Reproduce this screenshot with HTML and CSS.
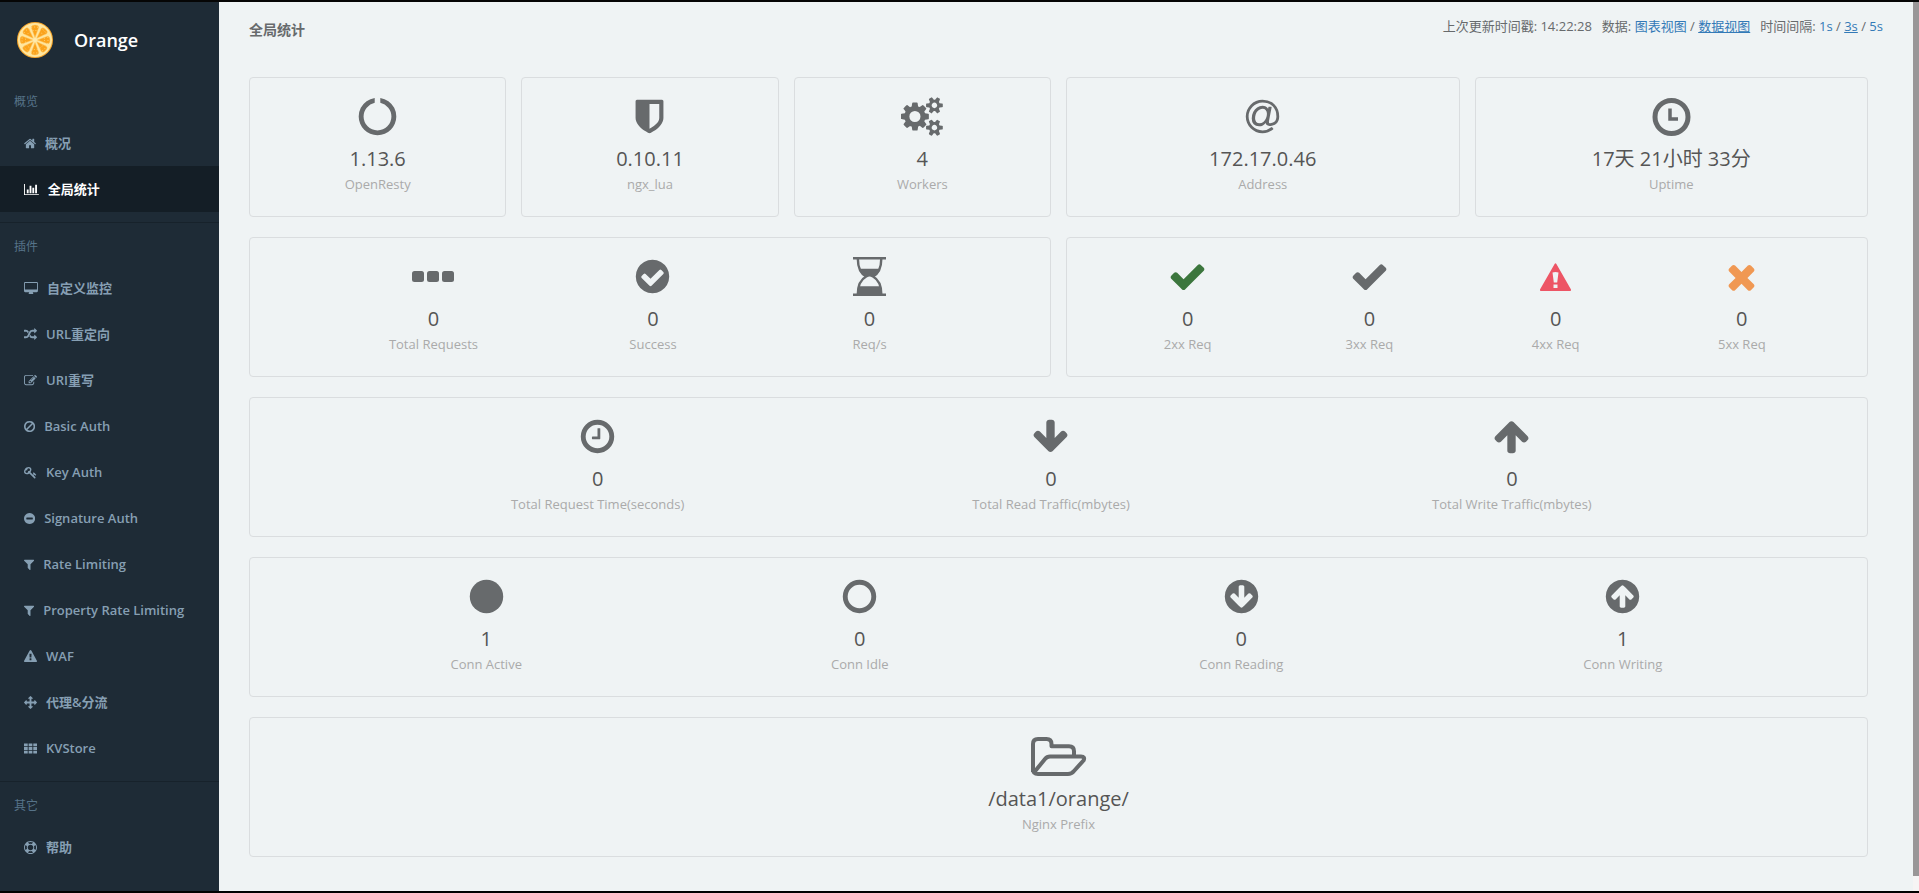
FILE: index.html
```html
<!DOCTYPE html>
<html lang="zh-CN">
<head>
<meta charset="utf-8">
<title>Orange - 全局统计</title>
<link rel="stylesheet" href="styles.css">
</head>
<body>
<svg class="sprite" aria-hidden="true">
  <symbol id="filter" viewBox="192 0 1408 1792"><path d="M1595 295q17 41-14 70l-493 493v742q0 42-39 59-13 5-25 5-27 0-45-19l-256-256q-19-19-19-45v-486l-493-493q-31-29-14-70 17-39 59-39h1280q42 0 59 39z"/></symbol>
  <symbol id="check" viewBox="0 0 1792 1792"><path d="M1671 566q0 40-28 68l-724 724-136 136q-28 28-68 28t-68-28l-136-136-362-362q-28-28-28-68t28-68l136-136q28-28 68-28t68 28l294 295 656-657q28-28 68-28t68 28l136 136q28 28 28 68z"/></symbol>
  <symbol id="circle-down" viewBox="0 0 1792 1792"><path d="M1412 897q0-27-18-45l-91-91q-18-18-45-18t-45 18l-189 189v-502q0-26-19-45t-45-19h-128q-26 0-45 19t-19 45v502l-189-189q-19-19-45-19t-45 19l-91 91q-18 18-18 45t18 45l362 362 91 91q18 18 45 18t45-18l91-91 362-362q18-18 18-45zm252-1q0 209-103 385.500t-279.500 279.500-385.500 103-385.500-103-279.500-279.500-103-385.500 103-385.500 279.500-279.500 385.500-103 385.500 103 279.500 279.500 103 385.500z" fill-rule="evenodd"/></symbol>
</svg>
<div class="app">
  <nav class="sidebar">
    <div class="brand">
      <svg class="brand-logo" viewBox="0 0 36 36" aria-hidden="true">
        <circle cx="18" cy="18" r="18" fill="#f6a62c"/>
        <circle cx="18" cy="18" r="17" fill="#ffe6a0"/>
        <g fill="#fba31c" stroke="#ffc45c" stroke-width=".5">
          <path id="seg" d="M18 15.500L14.300 5.500Q14.200 3.200 18 3T21.700 5.500z"/>
          <use href="#seg" transform="rotate(45 18 18)"/>
          <use href="#seg" transform="rotate(90 18 18)"/>
          <use href="#seg" transform="rotate(135 18 18)"/>
          <use href="#seg" transform="rotate(180 18 18)"/>
          <use href="#seg" transform="rotate(225 18 18)"/>
          <use href="#seg" transform="rotate(270 18 18)"/>
          <use href="#seg" transform="rotate(315 18 18)"/>
        </g>
        <circle cx="18" cy="18" r="13" fill="none" stroke="#ffdf94" stroke-width=".8" stroke-dasharray="1 2"/>
        <circle cx="18" cy="18" r="9.500" fill="none" stroke="#ffdf94" stroke-width=".8" stroke-dasharray="1 2"/>
        <circle cx="18" cy="18" r="2" fill="#ffe9ad"/>
      </svg>
      <span class="brand-name">Orange</span>
    </div>
    <section class="nav-group">
      <h2 class="nav-heading">概览</h2>
      <a class="nav-link" href="#"><svg viewBox="64 0 1664 1792"><path d="M1472 992v480q0 26-19 45t-45 19h-384v-384h-256v384h-384q-26 0-45-19t-19-45v-480q0-1 .5-3t.5-3l575-474 575 474q1 2 1 6zm223-69l-62 74q-8 9-21 11h-3q-13 0-21-7l-692-577-692 577q-12 8-24 7-13-2-21-11l-62-74q-8-10-7-23.500t11-21.500l719-599q32-26 76-26t76 26l244 204v-195q0-14 9-23t23-9h192q14 0 23 9t9 23v408l219 182q10 8 11 21.500t-7 23.500z"/></svg>概况</a>
      <a class="nav-link nav-link-active" href="#"><svg viewBox="0 0 2048 1792"><path d="M640 896v512h-256v-512h256zm384-512v1024h-256v-1024h256zm1024 1152v128h-2048v-1536h128v1408h1920zm-640-896v768h-256v-768h256zm384-384v1152h-256v-1152h256z"/></svg>全局统计</a>
    </section>
    <section class="nav-group nav-group-ruled">
      <h2 class="nav-heading">插件</h2>
      <a class="nav-link" href="#"><svg viewBox="-64 0 1920 1792"><path d="M1728 992v-832q0-13-9.500-22.500t-22.500-9.500h-1600q-13 0-22.500 9.500t-9.500 22.500v832q0 13 9.500 22.500t22.500 9.500h1600q13 0 22.500-9.500t9.500-22.500zm128-832v1088q0 66-47 113t-113 47h-544q0 37 16 77.500t32 71 16 43.500q0 26-19 45t-45 19h-512q-26 0-45-19t-19-45q0-14 16-44t32-70 16-78h-544q-66 0-113-47t-47-113v-1088q0-66 47-113t113-47h1600q66 0 113 47t47 113z"/></svg>自定义监控</a>
      <a class="nav-link" href="#"><svg viewBox="0 0 1792 1792"><path d="M666 481q-60 92-137 273-22-45-37-72.500t-40.500-63.500-51-56.500-63-35-81.500-14.500h-224q-14 0-23-9t-9-23v-192q0-14 9-23t23-9h224q250 0 410 225zm1126 799q0 14-9 23l-320 320q-9 9-23 9-13 0-22.500-9.500t-9.500-22.500v-192q-32 0-85 .5t-81 1-73-1-71-5-64-10.500-63-18.500-58-28.500-59-40-55-53.500-56-69.500q59-93 136-273 22 45 37 72.500t40.500 63.500 51 56.500 63 35 81.500 14.500h256v-192q0-14 9-23t23-9q12 0 24 10l319 319q9 9 9 23zm0-896q0 14-9 23l-320 320q-9 9-23 9-13 0-22.500-9.500t-9.500-22.500v-192h-256q-48 0-87 15t-69 45-51 61.500-45 77.500q-32 62-78 171-29 66-49.500 111t-54 105-64 100-74 83-90 68.500-106.500 42-128 16.500h-224q-14 0-23-9t-9-23v-192q0-14 9-23t23-9h224q48 0 87-15t69-45 51-61.500 45-77.500q32-62 78-171 29-66 49.500-111t54-105 64-100 74-83 90-68.500 106.500-42 128-16.500h256v-192q0-14 9-23t23-9q12 0 24 10l319 319q9 9 9 23z"/></svg>URL重定向</a>
      <a class="nav-link" href="#"><svg viewBox="0 0 1792 1792"><path d="M888 1184l116-116-152-152-116 116v56h96v96h56zm440-720q-16-16-33 1l-350 350q-17 17-1 33t33-1l350-350q17-17 1-33zm80 594v190q0 119-84.500 203.500t-203.500 84.500h-832q-119 0-203.500-84.500t-84.500-203.500v-832q0-119 84.500-203.500t203.500-84.500h832q63 0 117 25 15 7 18 23 3 17-9 29l-49 49q-14 14-32 8-23-6-45-6h-832q-66 0-113 47t-47 113v832q0 66 47 113t113 47h832q66 0 113-47t47-113v-126q0-13 9-22l64-64q15-15 35-7t20 29zm-96-738l288 288-672 672h-288v-288zm444 132l-92 92-288-288 92-92q28-28 68-28t68 28l152 152q28 28 28 68t-28 68z"/></svg>URI重写</a>
      <a class="nav-link" href="#"><svg viewBox="128 0 1536 1792"><path d="M1440 893q0-161-87-295l-754 753q137 89 297 89 111 0 211.500-43.500t173.500-116.500 116-174.500 43-212.500zm-999 299l755-754q-135-91-300-91-148 0-273 73t-198 199-73 274q0 162 89 299zm1223-299q0 157-61 300t-163.500 246-245 164-298.500 61-298.500-61-245-164-163.500-246-61-300 61-299.500 163.500-245.500 245-164 298.500-61 298.500 61 245 164 163.500 245.500 61 299.500z"/></svg>Basic Auth</a>
      <a class="nav-link" href="#"><svg viewBox="0 0 1792 1792"><path d="M832 512q0-80-56-136t-136-56-136 56-56 136q0 42 19 83-41-19-83-19-80 0-136 56t-56 136 56 136 136 56 136-56 56-136q0-42-19-83 41 19 83 19 80 0 136-56t56-136zm851 704q0 17-49 66t-66 49q-9 0-28.500-16t-36.500-33-38.500-40-24.500-26l-96 96 220 220q28 28 28 68 0 42-39 81t-81 39q-40 0-68-28l-671-671q-176 131-365 131-163 0-265.500-102.500t-102.500-265.500q0-160 95-313t248-248 313-95q163 0 265.500 102.500t102.500 265.500q0 189-131 365l355 355 96-96q-3-3-26-24.500t-40-38.500-33-36.500-16-28.500q0-17 49-66t66-49q13 0 23 10 6 6 46 44.500t82 79.500 86.500 86 73 78 28.500 41z"/></svg>Key Auth</a>
      <a class="nav-link" href="#"><svg viewBox="128 0 1536 1792"><path d="M1344 960v-128q0-26-19-45t-45-19h-768q-26 0-45 19t-19 45v128q0 26 19 45t45 19h768q26 0 45-19t19-45zm320-64q0 209-103 385.500t-279.500 279.500-385.500 103-385.500-103-279.500-279.500-103-385.500 103-385.500 279.500-279.500 385.500-103 385.500 103 279.500 279.500 103 385.500z" fill-rule="evenodd"/></svg>Signature Auth</a>
      <a class="nav-link" href="#"><svg viewBox="0 0 1408 1792"><use href="#filter" width="1408" height="1792"/></svg>Rate Limiting</a>
      <a class="nav-link" href="#"><svg viewBox="0 0 1408 1792"><use href="#filter" width="1408" height="1792"/></svg>Property Rate Limiting</a>
      <a class="nav-link" href="#"><svg viewBox="0 0 1792 1792"><path fill-rule="evenodd" d="M1024 1375v-190q0-14-9.500-23.500t-22.500-9.500h-192q-13 0-22.500 9.500t-9.500 23.500v190q0 14 9.500 23.500t22.500 9.500h192q13 0 22.500-9.500t9.500-23.500zm-2-374l18-459q0-12-10-19-13-11-24-11h-220q-11 0-24 11-10 7-10 21l17 457q0 10 10 16.500t24 6.500h185q14 0 23.500-6.500t10.500-16.500zm-14-934l768 1408q35 63-2 126-17 29-46.500 46t-63.500 17h-1536q-34 0-63.500-17t-46.500-46q-37-63-2-126l768-1408q17-31 47-49t65-18 65 18 47 49z"/></svg>WAF</a>
      <a class="nav-link" href="#"><svg viewBox="0 0 1792 1792"><path d="M1792 896q0 26-19 45l-256 256q-19 19-45 19t-45-19-19-45v-128h-384v384h128q26 0 45 19t19 45-19 45l-256 256q-19 19-45 19t-45-19l-256-256q-19-19-19-45t19-45 45-19h128v-384h-384v128q0 26-19 45t-45 19-45-19l-256-256q-19-19-19-45t19-45l256-256q19-19 45-19t45 19 19 45v128h384v-384h-128q-26 0-45-19t-19-45 19-45l256-256q19-19 45-19t45 19l256 256q19 19 19 45t-19 45-45 19h-128v384h384v-128q0-26 19-45t45-19 45 19l256 256q19 19 19 45z"/></svg>代理&amp;分流</a>
      <a class="nav-link" href="#"><svg viewBox="0 0 1792 1792"><path d="M0 192h512v384H0zM640 192h512v384H640zM1280 192h512v384h-512zM0 704h512v384H0zM640 704h512v384H640zM1280 704h512v384h-512zM0 1216h512v384H0zM640 1216h512v384H640zM1280 1216h512v384h-512z"/></svg>KVStore</a>
    </section>
    <section class="nav-group nav-group-ruled">
      <h2 class="nav-heading">其它</h2>
      <a class="nav-link" href="#"><svg viewBox="0 0 1792 1792"><path fill-rule="evenodd" d="M896 0q182 0 348 71t286 191 191 286 71 348-71 348-191 286-286 191-348 71-348-71-286-191-191-286-71-348 71-348 191-286 286-191 348-71zm0 128q-190 0-361 90l194 194q82-28 167-28t167 28l194-194q-171-90-361-90zm-678 1129l194-194q-28-82-28-167t28-167l-194-194q-90 171-90 361t90 361zm678 407q190 0 361-90l-194-194q-82 28-167 28t-167-28l-194 194q171 90 361 90zm0-384q159 0 271.500-112.500t112.500-271.500-112.500-271.500-271.500-112.500-271.500 112.500-112.500 271.500 112.500 271.500 271.500 112.500zm484-217l194 194q90-171 90-361t-90-361l-194 194q28 82 28 167t-28 167z"/></svg>帮助</a>
    </section>
  </nav>

  <main class="content">
    <header class="page-head">
      <h1 class="page-title">全局统计</h1>
      <div class="page-tools">
        <span>上次更新时间戳: 14:22:28</span>
        <span>数据: <a href="#">图表视图</a> / <a class="current" href="#">数据视图</a></span>
        <span>时间间隔: <a href="#">1s</a> / <a class="current" href="#">3s</a> / <a href="#">5s</a></span>
      </div>
    </header>

    <div class="cards">
      <section class="card span-2">
        <div class="stat"><svg class="icon" viewBox="0 0 1792 1792"><path d="M1760 896q0 176-68.500 336t-184 275.500-275.500 184-336 68.500-336-68.500-275.500-184-184-275.500-68.500-336q0-213 97-398.500t265-305.500 374-151v228q-221 45-366.500 221t-145.500 406q0 130 51 248.500t136.500 204 204 136.500 248.500 51 248.500-51 204-136.500 136.500-204 51-248.500q0-230-145.500-406t-366.500-221v-228q206 31 374 151t265 305.500 97 398.500z"/></svg><p class="value">1.13.6</p><p class="label">OpenResty</p></div>
      </section>
      <section class="card span-2">
        <div class="stat"><svg class="icon" viewBox="0 0 1792 1792"><path d="M1344 960v-640h-448v1137q119-63 213-137 235-184 235-360zm192-768v768q0 86-33.500 170.500t-83 150-118 127.500-126.500 103-121 77.500-89.500 49.500-42.500 20q-12 6-26 6t-26-6q-16-7-42.500-20t-89.500-49.500-121-77.500-126.500-103-118-127.500-83-150-33.500-170.500v-768q0-26 19-45t45-19h1152q26 0 45 19t19 45z" fill-rule="evenodd"/></svg><p class="value">0.10.11</p><p class="label">ngx_lua</p></div>
      </section>
      <section class="card span-2">
        <div class="stat"><svg class="icon" viewBox="-64 0 1920 1792"><path d="M832 896q0-106-75-181t-181-75-181 75-75 181 75 181 181 75 181-75 75-181zm768 512q0-52-38-90t-90-38-90 38-38 90q0 53 37.500 90.500t90.500 37.500 90.500-37.500 37.500-90.500zm0-1024q0-52-38-90t-90-38-90 38-38 90q0 53 37.500 90.500t90.500 37.500 90.500-37.500 37.500-90.500zm-384 421v185q0 10-7 19.500t-16 10.500l-155 24q-11 35-32 76 34 48 90 115 7 11 7 20 0 12-7 19-23 30-82.500 89.500t-78.500 59.500q-11 0-21-7l-115-90q-37 19-77 31-11 108-23 155-7 24-30 24h-186q-11 0-20-7.500t-10-17.500l-23-153q-34-10-75-31l-118 89q-7 7-20 7-11 0-21-8-144-133-144-160 0-9 7-19 10-14 41-53t47-61q-23-44-35-82l-152-24q-10-1-17-9.500t-7-19.500v-185q0-10 7-19.500t16-10.500l155-24q11-35 32-76-34-48-90-115-7-11-7-20 0-12 7-20 22-30 82-89t79-59q11 0 21 7l115 90q34-18 77-32 11-108 23-154 7-24 30-24h186q11 0 20 7.500t10 17.500l23 153q34 10 75 31l118-89q8-7 20-7 11 0 21 8 144 133 144 160 0 8-7 19-12 16-42 54t-45 60q23 48 34 82l152 23q10 2 17 10.500t7 19.500zm640 533v140q0 16-149 31-12 27-30 52 51 113 51 138 0 4-4 7-122 71-124 71-8 0-46-47t-52-68q-20 2-30 2t-30-2q-14 21-52 68t-46 47q-2 0-124-71-4-3-4-7 0-25 51-138-18-25-30-52-149-15-149-31v-140q0-16 149-31 13-29 30-52-51-113-51-138 0-4 4-7 4-2 35-20t59-34 30-16q8 0 46 46.500t52 67.500q20-2 30-2t30 2q51-71 92-112l6-2q4 0 124 70 4 3 4 7 0 25-51 138 17 23 30 52 149 15 149 31zm0-1024v140q0 16-149 31-12 27-30 52 51 113 51 138 0 4-4 7-122 71-124 71-8 0-46-47t-52-68q-20 2-30 2t-30-2q-14 21-52 68t-46 47q-2 0-124-71-4-3-4-7 0-25 51-138-18-25-30-52-149-15-149-31v-140q0-16 149-31 13-29 30-52-51-113-51-138 0-4 4-7 4-2 35-20t59-34 30-16q8 0 46 46.500t52 67.500q20-2 30-2t30 2q51-71 92-112l6-2q4 0 124 70 4 3 4 7 0 25-51 138 17 23 30 52 149 15 149 31z" fill-rule="evenodd"/></svg><p class="value">4</p><p class="label">Workers</p></div>
      </section>
      <section class="card span-3">
        <div class="stat"><svg class="icon" viewBox="0 0 1792 1792"><path d="M1100 775q0-108-53.500-169t-147.500-61q-63 0-124 30.500t-110 84.500-79.500 137-30.500 180q0 112 53.500 173t150.500 61q96 0 176-66.500t122.500-166 42.500-203.500zm564 121q0 111-37 197t-98.500 135-131.500 74.500-145 27.500q-6 0-15.500.5t-16.500.5q-95 0-142-53-28-33-33-83-52 66-131.500 110t-173.500 44q-161 0-249.500-95.500t-88.500-269.500q0-157 66-290t179-210.500 246-77.500q87 0 155 35.500t106 99.500l2-19 11-56q1-6 5.500-12t9.500-6h118q5 0 13 11 5 5 3 16l-120 614q-5 24-5 48 0 39 12.500 52t44.500 13q28-1 57-5.500t73-24 77-50 57-89.500 24-137q0-292-174-466t-466-174q-130 0-248.500 51t-204 136.500-136.500 204-51 248.500 51 248.500 136.500 204 204 136.500 248.500 51q228 0 405-144 11-9 24-8t21 12l41 49q8 12 7 24-2 13-12 22-102 83-227.500 128t-258.500 45q-156 0-298-61t-245-164-164-245-61-298 61-298 164-245 245-164 298-61q344 0 556 212t212 556z"/></svg><p class="value">172.17.0.46</p><p class="label">Address</p></div>
      </section>
      <section class="card span-3">
        <div class="stat"><svg class="icon" viewBox="0 0 39 39"><circle cx="19.500" cy="20" r="16.500" fill="none" stroke="currentColor" stroke-width="5"/><path d="M18 11.500v10.500h8" fill="none" stroke="currentColor" stroke-width="3.500"/></svg><p class="value">17天 21小时 33分</p><p class="label">Uptime</p></div>
      </section>

      <section class="card span-6 cols-3">
        <div class="stat"><svg class="icon" viewBox="0 0 42 39"><rect x="0" y="14" width="12" height="11" rx="2.500"/><rect x="15" y="14" width="12" height="11" rx="2.500"/><rect x="30" y="14" width="12" height="11" rx="2.500"/></svg><p class="value">0</p><p class="label">Total Requests</p></div>
        <div class="stat"><svg class="icon" viewBox="0 0 1792 1792"><path fill-rule="evenodd" d="M1412 734q0-28-18-46l-91-90q-19-19-45-19t-45 19l-408 407-226-226q-19-19-45-19t-45 19l-91 90q-18 18-18 46 0 27 18 45l362 362q19 19 45 19 27 0 46-19l543-543q18-18 18-45zm252 162q0 209-103 385.500t-279.500 279.500-385.500 103-385.500-103-279.500-279.500-103-385.500 103-385.500 279.500-279.500 385.500-103 385.500 103 279.500 279.500 103 385.500z"/></svg><p class="value">0</p><p class="label">Success</p></div>
        <div class="stat"><svg class="icon" viewBox="0 0 34 40"><path d="M0 0h34v2.500H0zM0 37.500h34V40H0z"/><path d="M5 2C5 12 8 17 13.500 20C8 23 5 28 5 38M29 2C29 12 26 17 20.500 20C26 23 29 28 29 38" fill="none" stroke="currentColor" stroke-width="2.500"/><path d="M6 12h22c-2 5-4 6-7 8.500q-4-1-8 0C10 18 8 17 6 12zM6 30h22l1 8H5z"/></svg><p class="value">0</p><p class="label">Req/s</p></div>
      </section>
      <section class="card span-6 cols-4">
        <div class="stat"><svg class="icon icon-ok" viewBox="0 0 1792 1792"><use href="#check" width="1792" height="1792"/></svg><p class="value">0</p><p class="label">2xx Req</p></div>
        <div class="stat"><svg class="icon" viewBox="0 0 1792 1792"><use href="#check" width="1792" height="1792"/></svg><p class="value">0</p><p class="label">3xx Req</p></div>
        <div class="stat"><svg class="icon icon-danger" viewBox="0 0 39 39"><path fill-rule="evenodd" d="M18.600 7q.9-1.400 1.800 0L35 32.500q.4 1.500-1 1.500H5q-1.400 0-1-1.500zM16.500 15.500l1.300 10h3.400l1.300-10q-3-1-6 0zM17.500 27.500v3.500h4v-3.500z"/></svg><p class="value">0</p><p class="label">4xx Req</p></div>
        <div class="stat"><svg class="icon icon-warn" viewBox="0 0 1792 1792"><path d="M1490 1322q0 40-28 68l-136 136q-28 28-68 28t-68-28l-294-294-294 294q-28 28-68 28t-68-28l-136-136q-28-28-28-68t28-68l294-294-294-294q-28-28-28-68t28-68l136-136q28-28 68-28t68 28l294 294 294-294q28-28 68-28t68 28l136 136q28 28 28 68t-28 68l-294 294 294 294q28 28 28 68z"/></svg><p class="value">0</p><p class="label">5xx Req</p></div>
      </section>

      <section class="card span-12 cols-3 cols-wide">
        <div class="stat"><svg class="icon" viewBox="0 0 1792 1792"><circle cx="896" cy="896" r="656" fill="none" stroke="currentColor" stroke-width="224"/><path d="M1024 544v448q0 14-9 23t-23 9h-320q-14 0-23-9t-9-23v-64q0-14 9-23t23-9h224v-352q0-14 9-23t23-9h64q14 0 23 9t9 23z"/></svg><p class="value">0</p><p class="label">Total Request Time(seconds)</p></div>
        <div class="stat"><svg class="icon" viewBox="0 0 1792 1792"><path d="M1675 832q0 53-37 90l-651 652q-39 37-91 37-53 0-90-37l-651-652q-38-36-38-90 0-53 38-91l74-75q39-37 91-37 53 0 90 37l294 294v-704q0-52 38-90t90-38h128q52 0 90 38t38 90v704l294-294q37-37 90-37 52 0 91 37l75 75q37 39 37 91z"/></svg><p class="value">0</p><p class="label">Total Read Traffic(mbytes)</p></div>
        <div class="stat"><svg class="icon" viewBox="0 0 1792 1792"><path d="M1675 971q0 51-37 90l-75 75q-38 38-91 38-54 0-90-38l-294-293v704q0 52-37.500 84.500t-90.500 32.500h-128q-53 0-90.500-32.500t-37.500-84.500v-704l-294 293q-36 38-90 38t-90-38l-75-75q-38-38-38-90 0-53 38-91l651-651q35-37 90-37 54 0 91 37l651 651q37 39 37 91z"/></svg><p class="value">0</p><p class="label">Total Write Traffic(mbytes)</p></div>
      </section>

      <section class="card span-12 cols-4 cols-wide">
        <div class="stat"><svg class="icon" viewBox="0 0 1792 1792"><circle cx="896" cy="896" r="768"/></svg><p class="value">1</p><p class="label">Conn Active</p></div>
        <div class="stat"><svg class="icon" viewBox="0 0 1792 1792"><circle cx="896" cy="896" r="656" fill="none" stroke="currentColor" stroke-width="224"/></svg><p class="value">0</p><p class="label">Conn Idle</p></div>
        <div class="stat"><svg class="icon" viewBox="0 0 1792 1792"><use href="#circle-down" width="1792" height="1792"/></svg><p class="value">0</p><p class="label">Conn Reading</p></div>
        <div class="stat"><svg class="icon" viewBox="0 0 1792 1792"><g transform="rotate(180 896 896)"><use href="#circle-down" width="1792" height="1792"/></g></svg><p class="value">1</p><p class="label">Conn Writing</p></div>
      </section>

      <section class="card span-12">
        <div class="stat"><svg class="icon" viewBox="0 1 56 39"><path d="M2 36V8q0-5 5-5h8.500q5 0 5 5v2.300H38q5 0 5 5v6M3 36.500L14 23q2-2.500 5-2.500h31q4.500 0 2.500 4L43 35q-2.500 3-6 3H7q-5 0-5-5" fill="none" stroke="currentColor" stroke-width="4" stroke-linejoin="round"/></svg><p class="value">/data1/orange/</p><p class="label">Nginx Prefix</p></div>
      </section>
    </div>
  </main>
  <div class="scroll-track" aria-hidden="true"><div class="scroll-thumb"></div></div>
</div>
</body>
</html>
```
FILE: styles.css
```css
* { box-sizing: border-box; }

body {
  margin: 0;
  background: #eff3f4;
  color: #676a6c;
  font: 13px/20px "Open Sans", "Noto Sans CJK SC", sans-serif;
}

h1, h2, p { margin: 0; }
a { color: #337ab7; text-decoration: none; }
svg { fill: currentColor; }
.sprite { display: none; }

.app {
  display: flex;
  min-height: 100vh;
  border-top: 2px solid #050505;
  border-bottom: 2px solid #000;
}

/* Sidebar */
.sidebar {
  flex: 0 0 219px;
  background: #1e2b36;
  color: #869fb3;
}
.brand {
  display: flex;
  align-items: center;
  gap: 21px;
  height: 76px;
  padding-left: 17px;
}
.brand-logo { width: 36px; height: 36px; }
.brand-name {
  color: #fff;
  font-size: 18px;
  font-weight: 600;
  line-height: 24px;
}
.nav-group { margin-bottom: 10px; }
.nav-group-ruled { border-top: 1px solid #17222b; }
.nav-heading {
  padding: 14px 14px 8px;
  color: #567389;
  font-size: 12px;
  font-weight: 400;
  line-height: 20px;
}
.nav-link {
  display: flex;
  align-items: center;
  gap: 9px;
  height: 46px;
  padding-left: 24px;
  color: inherit;
  font-weight: 600;
}
.nav-link svg { height: 13px; }
.nav-link-active { background: #141e26; color: #fff; }

/* Content */
.content { flex: 1; padding: 14px 30px 34px; }
.page-head {
  display: flex;
  justify-content: space-between;
  align-items: flex-start;
  margin-bottom: 37px;
}
.page-title {
  padding-top: 4px;
  font-size: 14px;
  font-weight: 600;
  line-height: 20px;
}
.page-tools { display: flex; gap: 10px; }
.page-tools .current { text-decoration: underline; }

.cards {
  display: grid;
  grid-template-columns: repeat(12, 1fr);
  gap: 20px 15px;
  margin-right: 15px;
}
.card {
  display: grid;
  padding: 19px 0 22px;
  border: 1px solid #dadddf;
  border-radius: 4px;
}
.span-2 { grid-column: span 2; }
.span-3 { grid-column: span 3; }
.span-6 { grid-column: span 6; }
.span-12 { grid-column: span 12; }
.cols-3 { grid-template-columns: 223fr 217fr 217fr; padding-left: 9%; padding-right: 9%; }
.cols-4 { grid-template-columns: 177fr 186fr 186fr 186fr; padding-left: 4%; padding-right: 4%; }
.cols-3.cols-wide { grid-template-columns: 445fr 460fr 460fr; padding-left: 7.7%; padding-right: 7.7%; }
.cols-4.cols-wide { grid-template-columns: 366fr 382fr 382fr 382fr; padding-left: 3.3%; padding-right: 3.3%; }

.stat {
  display: flex;
  flex-direction: column;
  align-items: center;
  text-align: center;
}
.icon { height: 39px; }
.icon-ok { color: #3c763d; }
.icon-danger { color: #ed5565; }
.icon-warn { color: #f09853; }
.value {
  margin-top: 8px;
  color: #555;
  font-size: 20px;
  line-height: 30px;
}
.label { color: #aaa; }

/* Scrollbar */
.scroll-track { flex: 0 0 6px; padding-bottom: 15px; background: #f6f4f4; }
.scroll-thumb { height: 100%; background: #999697; }
```
